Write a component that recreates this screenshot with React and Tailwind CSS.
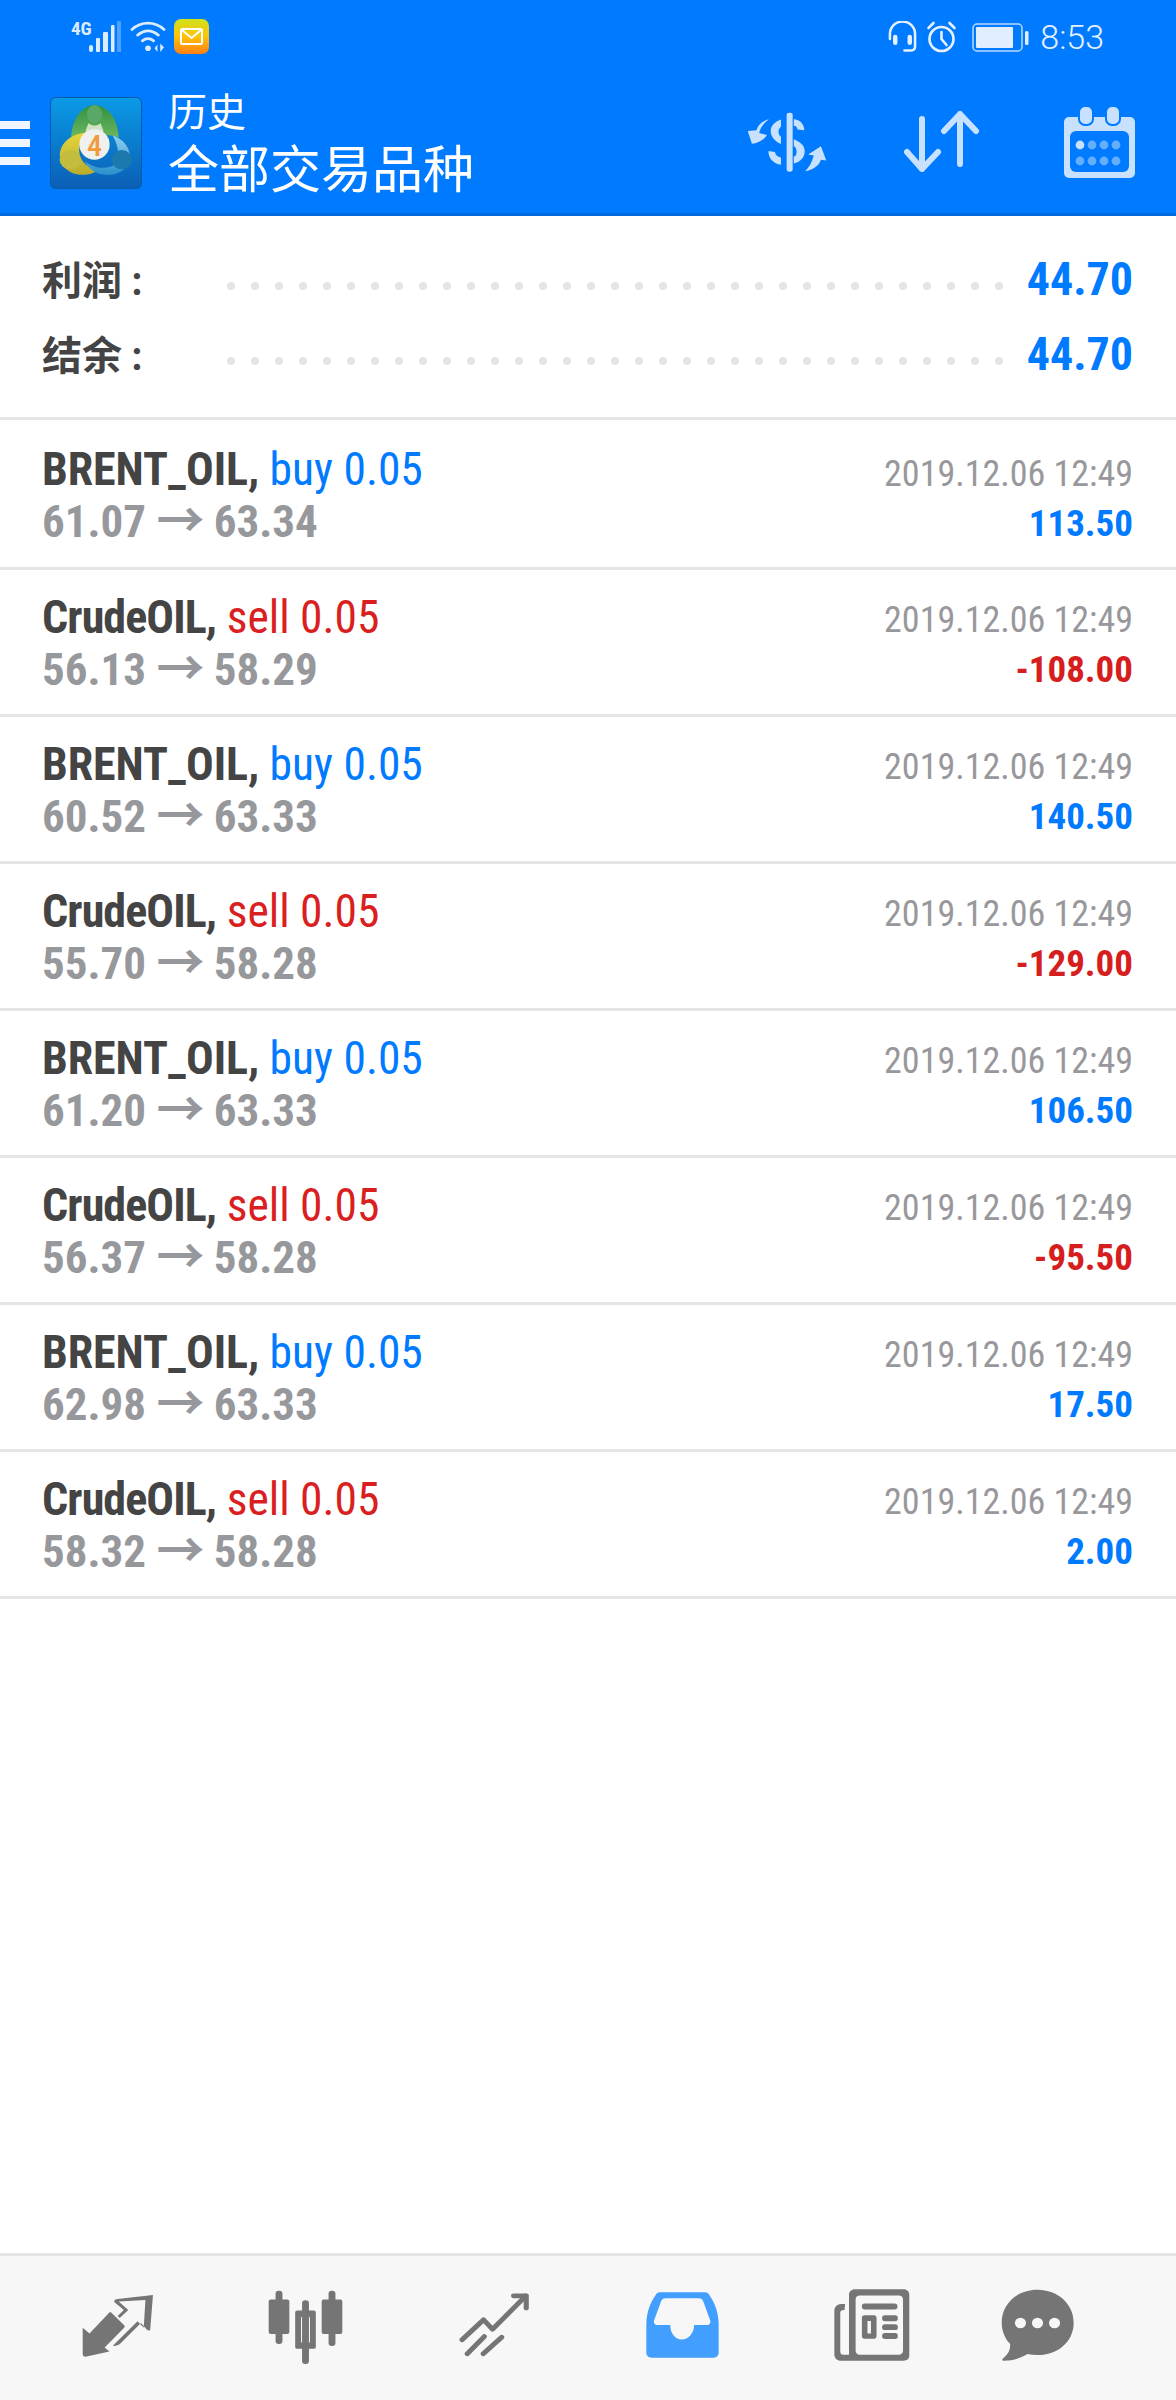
import React from "react";

const cond = "font-['Roboto','Noto_Sans_CJK_SC',sans-serif] [font-stretch:75%]";

const rows = [
  ["BRENT_OIL,", "buy 0.05", "61.07", "63.34", "113.50", true],
  ["CrudeOIL,", "sell 0.05", "56.13", "58.29", "-108.00", false],
  ["BRENT_OIL,", "buy 0.05", "60.52", "63.33", "140.50", true],
  ["CrudeOIL,", "sell 0.05", "55.70", "58.28", "-129.00", false],
  ["BRENT_OIL,", "buy 0.05", "61.20", "63.33", "106.50", true],
  ["CrudeOIL,", "sell 0.05", "56.37", "58.28", "-95.50", false],
  ["BRENT_OIL,", "buy 0.05", "62.98", "63.33", "17.50", true],
  ["CrudeOIL,", "sell 0.05", "58.32", "58.28", "2.00", true],
];

function Row({ r, first }) {
  const buy = r[1].startsWith("buy");
  return (
    <div className={"border-b-[3px] border-[#e5e5e5] pl-[42px] pr-[43px] flex justify-between " + (first ? "h-[150px]" : "h-[147px]")}>
      <div className={first ? "pt-[24px]" : "pt-[22px]"}>
        <div className="h-[51px] leading-[51px] text-[45.5px] whitespace-nowrap">
          <span className={"font-bold text-[#444444] text-[46px] " + (buy ? "tracking-[-0.1px]" : "tracking-[-0.9px]")}>{r[0]}</span>{" "}
          <span className={buy ? "text-[#007aff]" : "text-[#d91f1f]"}>{r[1]}</span>
        </div>
        <div className="h-[51px] leading-[51px] text-[45px] font-bold text-[#97989c] whitespace-nowrap">
          {r[2]} <span className="font-bold [font-stretch:100%] text-[48px] tracking-[-1px]">→</span> {r[3]}
        </div>
      </div>
      <div className={"text-right " + (first ? "pt-[29px]" : "pt-[25px]")}>
        <div className="h-[50px] leading-[50px] text-[36px] text-[#98989c] whitespace-nowrap">2019.12.06 12:49</div>
        <div className={"h-[50px] leading-[50px] text-[37px] font-bold " + (r[5] ? "text-[#007aff]" : "text-[#d61e1e]")}>{r[4]}</div>
      </div>
    </div>
  );
}

function Summary({ label, value }) {
  return (
    <div className="h-[75px] flex items-center">
      <div className="w-[185px] shrink-0 text-[40px] leading-[75px] font-bold text-[#444444] font-['Noto_Sans_CJK_SC',sans-serif] whitespace-nowrap">
        {label}<span className="font-['Roboto',sans-serif] [font-stretch:75%]"> :</span>
      </div>
      <div className="flex-1 flex justify-between pt-[13px]">
        {Array.from({ length: 33 }).map((_, i) => (
          <span key={i} className="w-[8px] h-[8px] rounded-full bg-[#e5e5e5]" />
        ))}
      </div>
      <div className="w-[130px] shrink-0 text-right text-[46px] leading-[75px] font-bold text-[#007aff]">{value}</div>
    </div>
  );
}

function Logo() {
  return (
    <svg width="92" height="92" viewBox="0 0 91 91" className="shrink-0">
      <defs>
        <linearGradient id="lg" x1="0" y1="0" x2="0" y2="1">
          <stop offset="0" stopColor="#0a9ae6" />
          <stop offset="1" stopColor="#0b5fb5" />
        </linearGradient>
        <linearGradient id="gr" x1="0" y1="0" x2="0" y2="1">
          <stop offset="0" stopColor="#2f9142" />
          <stop offset="1" stopColor="#6db65e" />
        </linearGradient>
        <linearGradient id="ye" x1="0" y1="0" x2="0" y2="1">
          <stop offset="0" stopColor="#e6d53c" />
          <stop offset="1" stopColor="#b9ac2c" />
        </linearGradient>
        <linearGradient id="bl" x1="0" y1="0" x2="0" y2="1">
          <stop offset="0" stopColor="#8fd0ee" />
          <stop offset="1" stopColor="#2a8fcb" />
        </linearGradient>
      </defs>
      <rect x="0.5" y="0.5" width="90" height="90" rx="5" fill="url(#lg)" stroke="#0a5aaa" />
      <path d="M44 8c-13 1-22 14-23 32 5-2 11-3 16-1 5-2 9-2 14 0 6-2 11-1 17 1-1-18-10-31-24-32z" fill="url(#gr)" />
      <path d="M38 26c4 3 8 3 12 0l3 8-9 6-9-6z" fill="#cfe3c4" />
      <ellipse cx="44" cy="17" rx="7.5" ry="9" fill="#5aa866" />
      <path d="M36 35C22 36 12 44 10 54c-2 13 8 23 22 23 7 0 13-2 17-6-9 0-16-4-19-12-3-9 0-17 6-24z" fill="url(#ye)" />
      <ellipse cx="20" cy="62" rx="10.5" ry="9.5" fill="#c3bd3f" />
      <path d="M62 38c9 3 16 10 17 19 1 13-11 21-25 20-9-1-16-6-20-14 8 7 19 9 28 5 7-5 7-18 0-30z" fill="url(#bl)" />
      <ellipse cx="71" cy="62" rx="10" ry="9.5" fill="#1c78ad" />
      <circle cx="44" cy="47" r="15" fill="#f0f0ee" />
      <text x="44" y="58" textAnchor="middle" fontSize="30" fontFamily="Roboto" fontWeight="500" fill="#ef9b3d">4</text>
    </svg>
  );
}

function ExchangeIcon() {
  return (
    <svg width="80" height="60" viewBox="422 335 212 182" preserveAspectRatio="none" fill="#c7e1ff">
      <rect x="527" y="337" width="16" height="179" rx="7" />
      <path d="M512 358c-17 7-28 20-27 36 0 16 11 30 27 38v-22c-8-5-9-24 0-30z" />
      <path d="M546 357c15 1 27 13 28 33l-18-2c-1-6-5-11-10-11z" />
      <path d="M546 418c17 8 28 18 29 35 0 22-13 33-29 38v-20c10-2 10-28 0-33z" />
      <path d="M479 453l17 3c1 8 6 14 16 17v22c-20-4-34-20-33-42z" />
      <path d="M480 357c-16 4-28 17-33 33l-23 3 11 38c17-2 33-12 40-26l-21-6c3-16 12-30 26-42z" />
      <path d="M576 515c20-4 37-16 42-35l14 2-14-43-34 25 15 3c-5 20-12 36-23 48z" />
    </svg>
  );
}

function ArrowsIcon() {
  return (
    <svg width="77" height="61" viewBox="0 0 77 61" fill="none" stroke="#c7e1ff" strokeWidth="6" strokeLinecap="round" strokeLinejoin="round">
      <path d="M19 8v50M4 41l15 17 16-17" />
      <path d="M57 53V3M41 20L57 3l16 17" />
    </svg>
  );
}

function CalendarIcon() {
  const dots = [];
  for (let y of [39, 55]) for (let i = 0; i < 4; i++) dots.push(<circle key={y + "-" + i} cx={16 + i * 12} cy={y} r="4.4" fill={i === 0 && y === 39 ? "#c7e1ff" : "#66afff"} />);
  return (
    <svg width="71" height="72" viewBox="0 0 71 72">
      <path d="M5 11h61a5 5 0 0 1 5 5v51a5 5 0 0 1-5 5H5a5 5 0 0 1-5-5V16a5 5 0 0 1 5-5z" fill="#c7e1ff" />
      <rect x="6" y="25" width="59" height="41" rx="6" fill="#007aff" />
      <rect x="15" y="0" width="14" height="19" rx="6" fill="#c7e1ff" stroke="#007aff" strokeWidth="2" />
      <rect x="42" y="0" width="14" height="19" rx="6" fill="#c7e1ff" stroke="#007aff" strokeWidth="2" />
      {dots}
    </svg>
  );
}

function StatusLeft() {
  return (
    <div className="flex items-center pl-[71px] h-full">
      <svg width="50" height="34" viewBox="0 0 50 34" className="shrink-0 overflow-visible">
        <text x="0" y="15" fontSize="19" fontWeight="700" fontFamily="Roboto" fill="#dcecff" style={{ fontStretch: "75%" }}>4G</text>
        <rect x="18" y="25" width="4" height="7" rx="2" fill="#dcecff" />
        <rect x="25" y="18" width="4" height="14" rx="1" fill="#dcecff" />
        <rect x="32" y="12" width="5" height="20" rx="1" fill="#dcecff" />
        <rect x="40" y="5" width="3.5" height="27" rx="1" fill="#dcecff" />
        <rect x="46" y="1" width="4" height="31" rx="1" fill="#dcecff" opacity="0.35" />
      </svg>
      <svg width="38" height="32" viewBox="0 0 38 34" className="ml-[8px] shrink-0" fill="none" stroke="#dcecff" strokeWidth="3" strokeLinecap="round">
        <path d="M2 9c10-9 24-9 34 0" />
        <path d="M8 15c7-6 15-6 22 0" />
        <path d="M13 21c4-3 8-3 12 0" />
        <circle cx="19" cy="29" r="3" fill="#dcecff" stroke="none" />
        <path d="M29 25l-3 4 3 4zM32 24l4 4-4 5z" fill="#dcecff" stroke="none" />
      </svg>
      <svg width="35" height="35" viewBox="0 0 35 35" className="ml-[7px] shrink-0">
        <defs>
          <linearGradient id="ml" x1="0" y1="0" x2="0" y2="1">
            <stop offset="0" stopColor="#cfe21c" />
            <stop offset="0.5" stopColor="#fdc309" />
            <stop offset="1" stopColor="#ff7f13" />
          </linearGradient>
        </defs>
        <rect width="35" height="35" rx="7" fill="url(#ml)" />
        <rect x="7" y="10" width="21" height="15" rx="1.5" fill="none" stroke="#fff" strokeWidth="2" />
        <path d="M8 11l9.5 8 9.5-8" fill="none" stroke="#fff" strokeWidth="2" />
      </svg>
    </div>
  );
}

function StatusRight() {
  return (
    <div className="flex items-center h-full pr-[72px]">
      <svg width="29" height="32" viewBox="0 0 30 32" fill="none" stroke="#e6f1ff" strokeWidth="2.6" strokeLinecap="round" className="shrink-0">
        <path d="M2 18v-5a13 13 0 0 1 26 0v13c0 3-2 4-5 4h-6" />
        <rect x="6.5" y="15" width="2" height="8" rx="1" fill="#e6f1ff" />
        <rect x="21.5" y="15" width="2" height="8" rx="1" fill="#e6f1ff" />
      </svg>
      <svg width="31" height="32" viewBox="0 0 30 32" fill="none" stroke="#e6f1ff" strokeWidth="2.6" strokeLinecap="round" className="ml-[9px] shrink-0">
        <circle cx="15" cy="18" r="12" />
        <path d="M15 11v7l5 6M2 7l5-5M28 7l-5-5" />
      </svg>
      <svg width="58" height="30" viewBox="0 0 58 30" className="ml-[15px] shrink-0">
        <rect x="1" y="2" width="49" height="27" rx="4" fill="none" stroke="#b8d9ff" strokeWidth="1.5" />
        <rect x="4" y="5" width="37" height="21" rx="1" fill="#e0eeff" />
        <rect x="53" y="9" width="3.5" height="14" rx="1.5" fill="#e0eeff" />
      </svg>
      <span className="ml-[10px] text-[34px] leading-[34px] font-light text-[#e6f1ff] font-['Roboto',sans-serif] [font-stretch:100%]">8:53</span>
    </div>
  );
}

function NavDeal() {
  return (
    <svg width="72" height="63" viewBox="118 162 210 192" preserveAspectRatio="none" fill="#757575">
      <path d="M204 219l37 38a6 6 0 0 1 0 8l-57 60 14 12-70 16c-5 0-8-3-8-8v-80l20 17 57-63c2-2 5-2 7 0z" />
      <path d="M222 177l103-12-8 105c-1 4-7 4-10 0l-17-20-60 63c-5 5-15 8-22 7l72-75 18 20 5-85-78 5 28 26-25 24-6-6 18-18-27-24c-2-4-1-8 9-10z" />
    </svg>
  );
}

function NavCandles() {
  return (
    <svg width="75" height="74" viewBox="648 145 218 225" preserveAspectRatio="none" fill="#757575">
      <rect x="670" y="147" width="20" height="162" rx="9" />
      <rect x="650" y="174" width="60" height="105" rx="6" />
      <rect x="824" y="147" width="20" height="168" rx="9" />
      <rect x="804" y="174" width="60" height="105" rx="6" />
      <rect x="747" y="176" width="20" height="194" rx="9" />
      <path fillRule="evenodd" d="M733 207h48a6 6 0 0 1 6 6v105a6 6 0 0 1-6 6h-48a6 6 0 0 1-6-6V213a6 6 0 0 1 6-6zm17 18a6 6 0 0 0-6 6v70a6 6 0 0 0 6 6h14a6 6 0 0 0 6-6v-70a6 6 0 0 0-6-6z" />
    </svg>
  );
}

function NavTrend() {
  return (
    <svg width="71" height="65" viewBox="1190 152 208 204" preserveAspectRatio="none" fill="none" stroke="#757575" strokeWidth="15" strokeLinecap="round" strokeLinejoin="round">
      <path d="M1199 302l63-63 26 30 97-104" />
      <path d="M1350 164h37v38" />
      <path d="M1214 346l50-54M1261 346l54-52" />
    </svg>
  );
}

function NavBox() {
  return (
    <svg width="73" height="66" viewBox="160 155 208 200" preserveAspectRatio="none">
      <path fillRule="evenodd" fill="#429eff" d="M200 156h128c6 0 10 4 13 9 13 20 26 50 26 88v86c0 9-6 15-15 15H176c-9 0-15-6-15-15v-86c0-38 13-68 26-88 3-5 7-9 13-9zm16 18c-7 0-11 4-13 9l-20 58c-2 8 2 14 10 14h36c0 26 15 44 33 44s35-18 35-44h36c8 0 12-6 10-14l-20-58c-2-5-6-9-13-9z" />
    </svg>
  );
}

function NavNews() {
  return (
    <svg width="76" height="72" viewBox="695 145 218 219" preserveAspectRatio="none" fill="#757575">
      <path fillRule="evenodd" d="M755 146h140c9 0 16 7 16 16v186c0 9-7 15-16 15H715c-11 0-19-8-19-19V212c0-12 8-21 20-21h11l-2 18c-8 0-12 2-12 8v118c0 6 3 10 9 10h16V162c0-9 8-16 17-16zm14 19c-7 0-12 5-12 12v156c0 7 5 12 12 12h112c7 0 12-5 12-12V177c0-7-5-12-12-12z" />
      <rect x="775" y="189" width="102" height="18" rx="8" />
      <rect x="833" y="225" width="45" height="18" rx="8" />
      <rect x="833" y="252" width="45" height="18" rx="8" />
      <rect x="833" y="279" width="45" height="18" rx="8" />
      <path fillRule="evenodd" d="M782 225h28c4 0 7 3 7 7v57c0 4-3 7-7 7h-28c-4 0-7-3-7-7v-57c0-4 3-7 7-7zm9 17v38h10v-38z" />
    </svg>
  );
}

function NavChat() {
  return (
    <svg width="73" height="72" viewBox="1172 145 210 218" preserveAspectRatio="none">
      <path fill="#757575" d="M1277 147c58 0 104 42 104 100s-46 98-104 98c-10 0-20-1-29-3-18 12-42 20-68 20-4 0-6-3-3-6 15-12 23-27 21-45-15-17-24-39-24-64 0-58 45-100 103-100z" />
      <circle cx="1228" cy="248" r="16" fill="#f7f7f7" />
      <circle cx="1277" cy="248" r="16" fill="#f7f7f7" />
      <circle cx="1326" cy="248" r="16" fill="#f7f7f7" />
    </svg>
  );
}

export default function App() {
  return (
    <div className={"w-[1176px] h-[2400px] flex flex-col bg-white " + cond}>
      <div className="h-[216px] shrink-0 bg-[#007aff] border-b-[3px] border-[#006bdf] flex flex-col">
        <div className="h-[73px] flex justify-between">
          <StatusLeft />
          <StatusRight />
        </div>
        <div className="flex-1 flex items-center pb-[1px]">
          <div className="w-[30px] flex flex-col gap-[10px] shrink-0">
            <span className="h-[8px] bg-[#f0f6ff]" />
            <span className="h-[8px] bg-[#f0f6ff]" />
            <span className="h-[8px] bg-[#f0f6ff]" />
          </div>
          <div className="ml-[20px]"><Logo /></div>
          <div className="ml-[26px] text-white font-['Noto_Sans_CJK_SC',sans-serif]">
            <div className="text-[39px] leading-[46px]">历史</div>
            <div className="text-[51px] leading-[68px]">全部交易品种</div>
          </div>
          <div className="ml-auto flex items-center pr-[41px] pb-[2px]">
            <ExchangeIcon />
            <div className="ml-[76px]"><ArrowsIcon /></div>
            <div className="ml-[84px]"><CalendarIcon /></div>
          </div>
        </div>
      </div>
      <div className="border-b-[3px] border-[#e5e5e5] h-[204px] shrink-0 pl-[42px] pr-[43px] pt-[26px]">
        <Summary label="利润" value="44.70" />
        <Summary label="结余" value="44.70" />
      </div>
      {rows.map((r, i) => <Row key={i} r={r} first={i === 0} />)}
      <div className="flex-1" />
      <div className="h-[147px] shrink-0 bg-[#f7f7f7] border-t-[3px] border-[#e5e5e5] flex items-start pl-[82px]">
        <div className="mt-[38px]"><NavDeal /></div>
        <div className="mt-[34px] ml-[114px]"><NavCandles /></div>
        <div className="mt-[36px] ml-[116px]"><NavTrend /></div>
        <div className="mt-[36px] ml-[116px]"><NavBox /></div>
        <div className="mt-[33px] ml-[115px]"><NavNews /></div>
        <div className="mt-[33px] ml-[91px]"><NavChat /></div>
      </div>
    </div>
  );
}
